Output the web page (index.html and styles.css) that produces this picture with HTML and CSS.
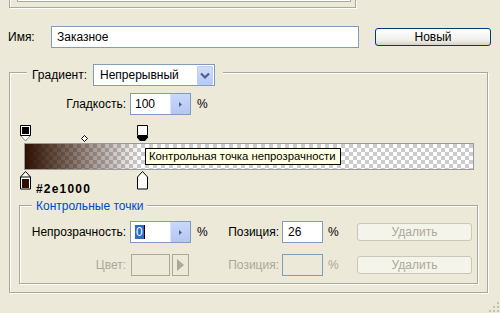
FILE: index.html
```html
<!DOCTYPE html>
<html>
<head>
<meta charset="utf-8">
<link rel="stylesheet" href="styles.css">
</head>
<body>
<div class="preset"><div class="preset-list"></div></div>

<div class="name-row">
  <label class="name-label">Имя:</label>
  <div class="field name-field">Заказное</div>
  <div class="btn">Новый</div>
</div>

<div class="group grad-group">
  <div class="legend grad-legend">
    <label class="grad-label">Градиент:</label>
    <div class="select">
      <span>Непрерывный</span>
      <div class="drop"><svg width="16" height="19" viewBox="0 0 16 19"><path d="M4 7.5l4 4 4-4" fill="none" stroke="#4d6185" stroke-width="2.2"/></svg></div>
    </div>
  </div>

  <div class="smooth-row">
    <label class="lbl smooth-lbl">Гладкость:</label>
    <div class="spin"><span class="spin-val">100</span><div class="spin-btn"><svg width="19" height="20" viewBox="0 0 19 20"><path d="M8 8l3 2.5-3 2.5z" fill="#4d6185"/></svg></div></div>
    <span class="pct">%</span>
  </div>

  <div class="editor">
    <div class="bar"></div>
    <svg class="stop stop-top s1" width="11" height="17" viewBox="0 0 11 17"><path d="M0.5 0.5h10v10l-5 5.5-5-5.5z" fill="#fff" stroke="#888"/><path d="M0.5 0.5h10v10h-10z" fill="#fff" stroke="#000"/><rect x="2" y="2" width="7" height="7" fill="#000"/></svg>
    <svg class="stop stop-top s2" width="11" height="17" viewBox="0 0 11 17"><path d="M0.5 0.5h10v10h-10z" fill="#fff" stroke="#000"/><path d="M0 11h11v1.5l-3 3.5h-5l-3-3.5z" fill="#000"/></svg>
    <svg class="mid" width="7" height="7" viewBox="0 0 7 7"><path d="M3.5 0.5l3 3-3 3-3-3z" fill="#fff" stroke="#000"/></svg>
    <svg class="stop stop-bot s1" width="11" height="19" viewBox="0 0 11 19"><path d="M5.5 0.5l5 5.5v12h-10v-12z" fill="#fff" stroke="#000"/><path d="M0.5 6h10" stroke="#000"/><rect x="2" y="8" width="7" height="9" fill="#2e1000"/></svg>
    <svg class="stop stop-bot s2" width="11" height="19" viewBox="0 0 11 19"><path d="M5.5 0.5l5 5.5v12h-10v-12z" fill="#fff" stroke="#000"/></svg>
    <div class="tooltip">Контрольная точка непрозрачности</div>
  </div>

  <div class="hex">#2e1000</div>

  <div class="group stops-group">
    <div class="legend stops-legend">Контрольные точки</div>
    <div class="stops-grid">
      <label class="lbl">Непрозрачность:</label>
      <div class="spin"><span class="spin-val"><span class="sel">0</span></span><div class="spin-btn"><svg width="19" height="20" viewBox="0 0 19 20"><path d="M8 8l3 2.5-3 2.5z" fill="#4d6185"/></svg></div></div>
      <span class="pct">%</span>
      <label class="lbl pos-lbl">Позиция:</label>
      <div class="field pos-field">26</div>
      <span class="pct pct2">%</span>
      <div class="btn btn-off">Удалить</div>

      <label class="lbl off">Цвет:</label>
      <div class="color-cell"><div class="swatch"></div><div class="arrow-btn"><svg width="15" height="20" viewBox="0 0 15 20"><path d="M4 4l7 6-7 6z" fill="#aca899"/></svg></div></div>
      <span class="pct off">&nbsp;</span>
      <label class="lbl pos-lbl off">Позиция:</label>
      <div class="field pos-field field-off"></div>
      <span class="pct pct2 off">%</span>
      <div class="btn btn-off">Удалить</div>
    </div>
  </div>
</div>

<svg class="grip" width="12" height="12" viewBox="0 0 12 12"><g fill="#c5c2b2"><rect x="9" y="1" width="2" height="2"/><rect x="9" y="5" width="2" height="2"/><rect x="5" y="5" width="2" height="2"/><rect x="9" y="9" width="2" height="2"/><rect x="5" y="9" width="2" height="2"/><rect x="1" y="9" width="2" height="2"/></g></svg>
</body>
</html>
```

FILE: styles.css
```css
* { box-sizing: border-box; }
body { margin: 0; width: 500px; height: 313px; overflow: hidden; position: relative; background: #ece9d8; font-family: "Liberation Sans", Arial, sans-serif; font-size: 12px; color: #000; }

.preset { margin-left: 9px; width: 347px; height: 8px; border: 1px solid #aca899; border-top: 0; box-shadow: 1px 1px 0 #fff, inset 1px 0 0 #fff; }
.preset-list { margin-left: 7px; width: 334px; height: 2px; background: #fff; border: 1px solid #aca899; border-top: 0; }

.name-row { display: flex; align-items: center; height: 22px; margin-top: 18px; padding-left: 8px; }
.name-label { width: 43px; }
.field { height: 22px; line-height: 20px; background: #fff; border: 1px solid #7f9db9; padding-left: 5px; }
.name-field { width: 308px; }
.btn { height: 18px; line-height: 16px; text-align: center; border: 1px solid #003c74; border-radius: 3px; background: linear-gradient(#ffffff, #f0f0ea 70%, #d6d0c5); }
.name-row .btn { width: 116px; margin-left: 16px; }
.btn-off { width: 115px; border-color: #c9c7ba; background: #f5f4ea; color: #aca899; }

.group { border: 1px solid #aca899; box-shadow: 1px 1px 0 #fff, inset 1px 1px 0 #fff; }
.grad-group { margin: 24px 0 0 9px; width: 479px; height: 221px; }
.legend { width: max-content; background: #ece9d8; }
.grad-legend { display: flex; align-items: center; height: 22px; margin: -9px 0 0 17px; padding: 0 8px 0 5px; }
.grad-label { width: 61px; }
.select { display: flex; align-items: center; justify-content: space-between; width: 122px; height: 22px; padding: 1px 1px 1px 6px; background: #fff; border: 1px solid #7f9db9; }
.drop { width: 16px; height: 19px; border: 1px solid #bccdf9; border-radius: 1px; background: linear-gradient(#d2defd, #b6c9f9); }
.drop svg { display: block; margin: -1px; }

.smooth-row { display: flex; align-items: center; height: 22px; margin-top: 7px; }
.lbl { text-align: right; padding-right: 4px; }
.smooth-lbl { width: 120px; }
.spin { display: flex; width: 61px; height: 22px; background: #fff; border: 1px solid #7f9db9; }
.spin-val { flex: 1; line-height: 20px; padding-left: 4px; }
.spin-btn { width: 20px; background: linear-gradient(#cad7fb, #b4c6f6); border-left: 1px solid #d8e2fb; }
.spin-btn svg { display: block; }
.pct { padding-left: 6px; }

.editor { position: relative; width: 450px; margin: 10px 0 0 14px; padding: 18px 0 12px; }
.bar { height: 27px; border: 1px solid #9a9a9a; background-color: #fff;
  background-image: linear-gradient(to right, rgba(46,16,0,1), rgba(46,16,0,0) 26%),
    linear-gradient(45deg, #ccc 25%, transparent 25%, transparent 75%, #ccc 75%),
    linear-gradient(45deg, #ccc 25%, transparent 25%, transparent 75%, #ccc 75%);
  background-size: 100% 100%, 8px 8px, 8px 8px;
  background-position: 0 0, 0 0, 4px 4px; }
.stop { position: absolute; display: block; }
.stop-top { top: 0; }
.stop-bot { top: 46px; }
.s1 { left: -4px; }
.s2 { left: 113px; }
.mid { position: absolute; display: block; left: 57px; top: 10px; }
.tooltip { position: absolute; left: 121px; top: 23px; height: 17px; line-height: 15px; padding: 0 4px 0 3px; font-size: 11.3px; background: #ffffe1; border: 1px solid #000; white-space: nowrap; }

.hex { height: 14px; line-height: 14px; padding-left: 26px; font-weight: bold; font-size: 12px; letter-spacing: 1.2px; }

.stops-group { margin: 9px 9px 0 9px; height: 79px; }
.stops-legend { height: 16px; line-height: 16px; margin: -8px 0 0 12px; padding: 0 4px; color: #0046d5; }
.stops-grid { display: grid; grid-template-columns: 110px 61px 35px 56px 41px 34px 115px; grid-auto-rows: 22px; row-gap: 11px; align-items: center; margin-top: 7px; }
.stops-grid .pct2 { padding-left: 5px; }
.pos-lbl { padding-right: 3px; }
.pos-field { width: 41px; }
.sel { background: #316ac5; color: #fff; padding: 0 1px; border-right: 1px solid #000; }
.off { color: #aca899; }
.field-off { background: transparent; }
.color-cell { display: flex; gap: 2px; height: 22px; padding-left: 1px; }
.swatch { width: 39px; border: 1px solid #aca899; }
.arrow-btn { width: 17px; border: 1px solid #aca899; }
.arrow-btn svg { display: block; }

.grip { position: absolute; right: 0; bottom: 0; }
```
